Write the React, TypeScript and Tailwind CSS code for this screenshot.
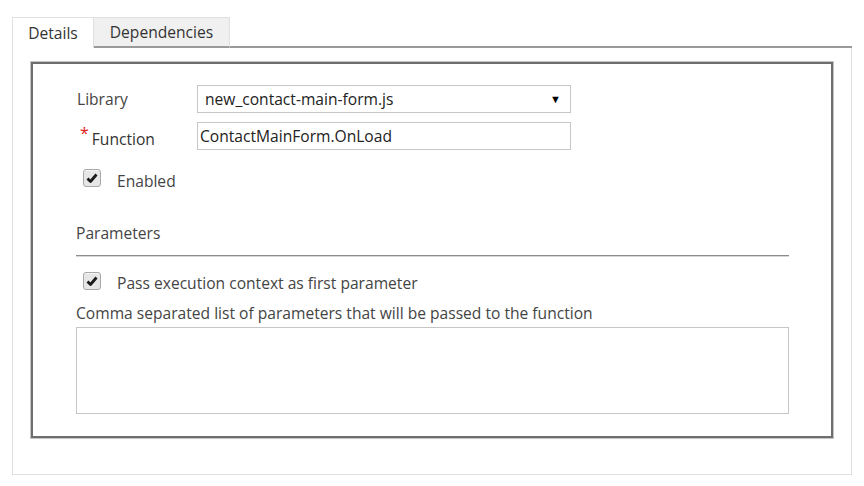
import { useState } from "react";

function CheckMark({ checked, onToggle }: { checked: boolean; onToggle: () => void }) {
  return (
    <button
      type="button"
      onClick={onToggle}
      className="flex h-[18px] w-[18px] items-center justify-center rounded-[3px] border border-[#a8a8a8] bg-[#e6e6e6] shadow-[inset_0_1px_0_#f4f4f4]"
    >
      {checked && (
        <svg viewBox="0 0 12 12" className="h-[12px] w-[12px]">
          <path d="M1.5 6.5 L4.5 9.5 L10.5 2.5" fill="none" stroke="#1a1a1a" strokeWidth="2.8" strokeLinejoin="round" />
        </svg>
      )}
    </button>
  );
}

export default function App() {
  const [enabled, setEnabled] = useState(true);
  const [passContext, setPassContext] = useState(true);
  const [functionName, setFunctionName] = useState("ContactMainForm.OnLoad");
  const [params, setParams] = useState("");

  return (
    <div className="min-h-[486px] bg-white pl-[12px] pt-[17px] font-['Open_Sans','Noto_Sans',sans-serif] text-[15.6px] leading-[20px] text-[#444]">
      <div className="w-[840px]">
        <div className="flex h-[31px]">
          <div className="flex w-[82px] items-center justify-center border-x border-t border-[#e0e0e0] bg-white text-[#333]">
            Details
          </div>
          <div className="flex w-[136px] items-center justify-center border-r border-t border-b-2 border-[#e0e0e0] border-b-[#9a9a9a] bg-[#f0f0f0] text-[#333]">
            Dependencies
          </div>
          <div className="flex-1 border-b-2 border-[#9a9a9a]" />
        </div>

        <div className="border-x border-b border-[#e0e0e0] pb-[36px] pl-[18px] pr-[18px] pt-[14px]">
          <div className="border-2 border-[#6e6e6e] pb-[22px] pl-[43px] pr-[42px] pt-[21px] shadow-[0_0_0_1px_#c4c4c4]">
            <div className="flex items-center">
              <div className="w-[121px] pl-[1px]">Library</div>
              <div className="flex h-[28px] w-[374px] items-center justify-between border border-[#c6c6c6] pl-[7px] pr-[9px] text-[#222]">
                <span>new_contact-main-form.js</span>
                <span className="text-[11px] text-black">▼</span>
              </div>
            </div>

            <div className="mt-[9px] flex items-center">
              <div className="flex w-[121px] items-start pl-[4px] pt-[6px]">
                <span className="mr-[3px] mt-[-6px] text-[16px] text-[#e02020]">*</span>
                <span className="text-[#333]">Function</span>
              </div>
              <input
                value={functionName}
                onChange={(event) => setFunctionName(event.target.value)}
                className="h-[28px] w-[374px] border border-[#c6c6c6] px-[2px] text-[#222] outline-none"
              />
            </div>

            <div className="mt-[18px] flex items-center pl-[7px]">
              <CheckMark checked={enabled} onToggle={() => setEnabled(!enabled)} />
              <span className="ml-[16px] translate-y-[3px]">Enabled</span>
            </div>

            <div className="mt-[35px]">Parameters</div>
            <div className="mt-[12px] h-[2px] border-t border-[#8c8c8c] bg-[#d8d8d8]" />

            <div className="mt-[14px] flex items-center pl-[7px]">
              <CheckMark checked={passContext} onToggle={() => setPassContext(!passContext)} />
              <span className="ml-[16px] translate-y-[2px]">Pass execution context as first parameter</span>
            </div>

            <div className="mt-[12px]">Comma separated list of parameters that will be passed to the function</div>
            <textarea
              value={params}
              onChange={(event) => setParams(event.target.value)}
              className="mt-[4px] block h-[87px] w-full resize-none border border-[#c6c6c6] outline-none"
            />
          </div>
        </div>
      </div>
    </div>
  );
}
